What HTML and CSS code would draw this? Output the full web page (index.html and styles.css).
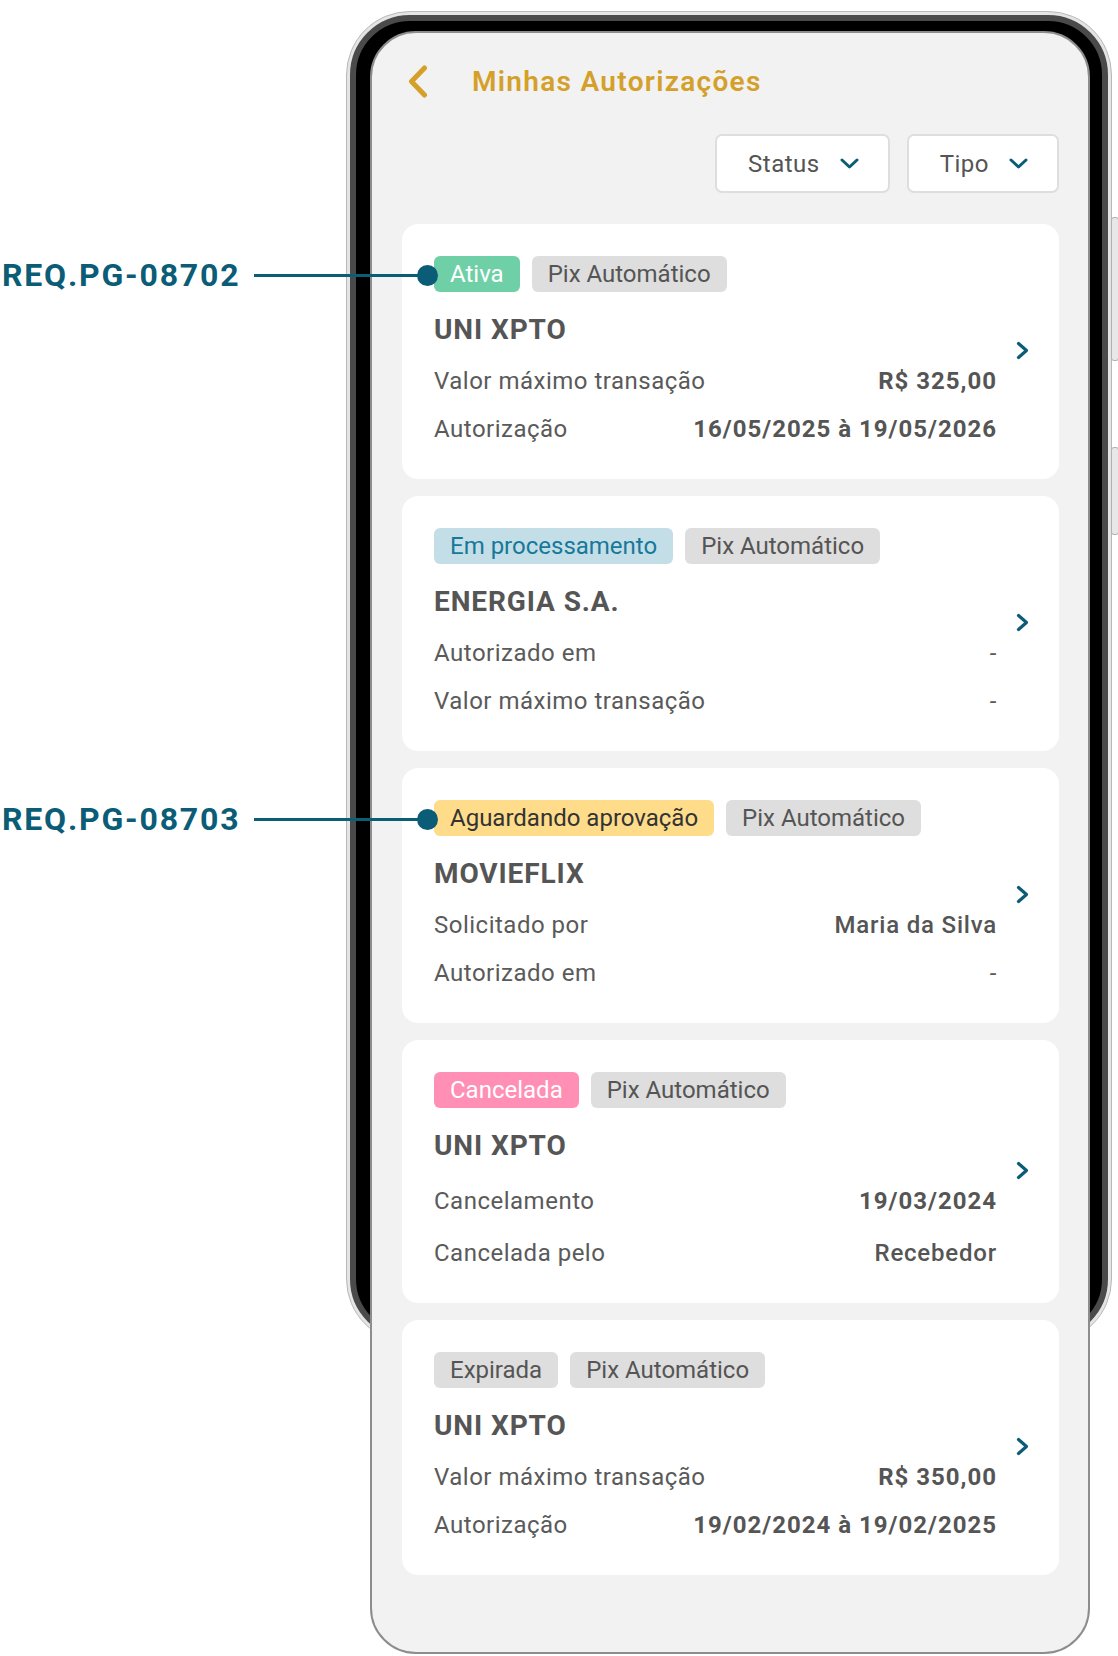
FILE: index.html
```html
<!DOCTYPE html>
<html lang="pt-BR">

<head>
    <meta charset="UTF-8">
    <title>Minhas Autorizações</title>
    <link rel="stylesheet" href="styles.css">
</head>

<body>
    <div class="page">
        <!-- moldura do aparelho -->
        <div class="phone-frame">
            <div class="bezel"></div>
        </div>
        <div class="side-btn side-btn-1"></div>
        <div class="side-btn side-btn-2"></div>

        <div class="screen">
            <div class="header">
                <svg class="back" width="20" height="33" viewBox="0 0 20 33">
                    <polyline points="16.5,3 3.5,16.5 16.5,30" fill="none" stroke="#d4a02a" stroke-width="5" stroke-linecap="round" stroke-linejoin="round" />
                </svg>
                <h1>Minhas Autorizações</h1>
            </div>

            <div class="filters">
                <div class="filter">Status
                    <svg width="19" height="11" viewBox="0 0 19 11">
                        <polyline points="2,2 9.5,9 17,2" fill="none" stroke="#0b5c76" stroke-width="3" stroke-linecap="round" stroke-linejoin="round" />
                    </svg>
                </div>
                <div class="filter">Tipo
                    <svg width="19" height="11" viewBox="0 0 19 11">
                        <polyline points="2,2 9.5,9 17,2" fill="none" stroke="#0b5c76" stroke-width="3" stroke-linecap="round" stroke-linejoin="round" />
                    </svg>
                </div>
            </div>

            <div class="list">
                <div class="card">
                    <div class="annot">
                        <span class="annot-label">REQ.PG-08702</span>
                        <span class="annot-line"></span>
                        <span class="annot-dot"></span>
                    </div>
                    <div class="card-body">
                        <div class="badges">
                            <span class="badge badge-active">Ativa</span>
                            <span class="badge">Pix Automático</span>
                        </div>
                        <h3>UNI XPTO</h3>
                        <div class="row"><span>Valor máximo transação</span><span class="strong">R$ 325,00</span></div>
                        <div class="row"><span>Autorização</span><span class="strong">16/05/2025 à 19/05/2026</span></div>
                    </div>
                    <svg class="go" width="13" height="19" viewBox="0 0 13 19">
                        <polyline points="2.5,2.5 10.5,9.5 2.5,16.5" fill="none" stroke="#0b5c76" stroke-width="3.2" stroke-linecap="round" stroke-linejoin="round" />
                    </svg>
                </div>

                <div class="card">
                    <div class="card-body">
                        <div class="badges">
                            <span class="badge badge-processing">Em processamento</span>
                            <span class="badge">Pix Automático</span>
                        </div>
                        <h3>ENERGIA S.A.</h3>
                        <div class="row"><span>Autorizado em</span><span>-</span></div>
                        <div class="row"><span>Valor máximo transação</span><span>-</span></div>
                    </div>
                    <svg class="go" width="13" height="19" viewBox="0 0 13 19">
                        <polyline points="2.5,2.5 10.5,9.5 2.5,16.5" fill="none" stroke="#0b5c76" stroke-width="3.2" stroke-linecap="round" stroke-linejoin="round" />
                    </svg>
                </div>

                <div class="card">
                    <div class="annot">
                        <span class="annot-label">REQ.PG-08703</span>
                        <span class="annot-line"></span>
                        <span class="annot-dot"></span>
                    </div>
                    <div class="card-body">
                        <div class="badges">
                            <span class="badge badge-waiting">Aguardando aprovação</span>
                            <span class="badge">Pix Automático</span>
                        </div>
                        <h3>MOVIEFLIX</h3>
                        <div class="row"><span>Solicitado por</span><span class="medium">Maria da Silva</span></div>
                        <div class="row"><span>Autorizado em</span><span>-</span></div>
                    </div>
                    <svg class="go" width="13" height="19" viewBox="0 0 13 19">
                        <polyline points="2.5,2.5 10.5,9.5 2.5,16.5" fill="none" stroke="#0b5c76" stroke-width="3.2" stroke-linecap="round" stroke-linejoin="round" />
                    </svg>
                </div>

                <div class="card card-wide">
                    <div class="card-body">
                        <div class="badges">
                            <span class="badge badge-canceled">Cancelada</span>
                            <span class="badge">Pix Automático</span>
                        </div>
                        <h3>UNI XPTO</h3>
                        <div class="row"><span>Cancelamento</span><span class="strong">19/03/2024</span></div>
                        <div class="row"><span>Cancelada pelo</span><span class="medium">Recebedor</span></div>
                    </div>
                    <svg class="go" width="13" height="19" viewBox="0 0 13 19">
                        <polyline points="2.5,2.5 10.5,9.5 2.5,16.5" fill="none" stroke="#0b5c76" stroke-width="3.2" stroke-linecap="round" stroke-linejoin="round" />
                    </svg>
                </div>

                <div class="card">
                    <div class="card-body">
                        <div class="badges">
                            <span class="badge">Expirada</span>
                            <span class="badge">Pix Automático</span>
                        </div>
                        <h3>UNI XPTO</h3>
                        <div class="row"><span>Valor máximo transação</span><span class="strong">R$ 350,00</span></div>
                        <div class="row"><span>Autorização</span><span class="strong">19/02/2024 à 19/02/2025</span></div>
                    </div>
                    <svg class="go" width="13" height="19" viewBox="0 0 13 19">
                        <polyline points="2.5,2.5 10.5,9.5 2.5,16.5" fill="none" stroke="#0b5c76" stroke-width="3.2" stroke-linecap="round" stroke-linejoin="round" />
                    </svg>
                </div>
            </div>
        </div>
    </div>
</body>

</html>
```

FILE: styles.css
```css
body {
    margin: 0;
    background: #fff;
    font-family: Roboto, "Liberation Sans", sans-serif;
    color: #5a5a5a;
}

.page {
    position: relative;
    width: 1118px;
    height: 1656px;
    overflow: hidden;
}

/* aparelho */
.phone-frame {
    position: absolute;
    left: 346px;
    top: 11px;
    width: 766px;
    height: 1332px;
    box-sizing: border-box;
    border-radius: 64px;
    background: #e4e4e4;
    border: 1px solid #b8b8b8;
    padding: 3px;
}

.bezel {
    height: 100%;
    box-sizing: border-box;
    border-radius: 60px;
    background: #000;
    border: 6px solid #4a4a4a;
}

.side-btn {
    position: absolute;
    left: 1111px;
    width: 6px;
    border-radius: 3px;
    background: #e8e8e8;
    border: 1px solid #b0b0b0;
}

.side-btn-1 {
    top: 217px;
    height: 142px;
}

.side-btn-2 {
    top: 447px;
    height: 86px;
}

.screen {
    position: relative;
    z-index: 1;
    margin: 31px 0 0 370px;
    width: 720px;
    height: 1623px;
    box-sizing: border-box;
    background: #f2f2f2;
    border: 2px solid #8d8d8d;
    border-radius: 46px;
    padding: 0 29px 0 30px;
}

.header {
    display: flex;
    align-items: center;
    gap: 44px;
    padding: 32px 0 0 6px;
    height: 33px;
}

.header h1 {
    margin: 0;
    font-size: 28px;
    font-weight: 600;
    letter-spacing: 1.3px;
    color: #d4a02a;
}

.filters {
    display: flex;
    justify-content: flex-end;
    gap: 17px;
    margin-top: 36px;
}

.filter {
    display: flex;
    align-items: center;
    gap: 20px;
    height: 59px;
    box-sizing: border-box;
    padding: 0 29px 0 31px;
    background: #fff;
    border: 2px solid #dedede;
    border-radius: 7px;
    font-size: 24px;
    letter-spacing: 0.5px;
    color: #555;
}

.list {
    display: flex;
    flex-direction: column;
    gap: 17px;
    margin-top: 31px;
}

.card {
    position: relative;
    display: flex;
    align-items: center;
    background: #fff;
    border-radius: 16px;
    padding: 32px 30px 34px 32px;
}

.card-body {
    flex: 1;
    margin-right: 19px;
}

.badges {
    display: flex;
    gap: 12px;
}

.badge {
    height: 36px;
    line-height: 36px;
    padding: 0 16px;
    border-radius: 6px;
    font-size: 24px;
    background: #dedede;
    color: #555;
}

.badge-active {
    background: #6fd0a7;
    color: #fff;
}

.badge-processing {
    background: #c4dee7;
    color: #17799a;
}

.badge-waiting {
    background: #fedc8a;
    color: #333;
}

.badge-canceled {
    background: #ff8fb4;
    color: #fff;
}

.card h3 {
    margin: 21px 0 0;
    font-size: 28px;
    line-height: 34px;
    font-weight: 700;
    letter-spacing: 0.9px;
    color: #555;
}

.row {
    display: flex;
    justify-content: space-between;
    font-size: 24px;
    line-height: 32px;
    letter-spacing: 0.5px;
    margin-top: 16px;
}

.card h3 + .row {
    margin-top: 18px;
}

.card-wide .row {
    margin-top: 20px;
}

.card-wide h3 + .row {
    margin-top: 22px;
}

.strong {
    font-weight: 700;
    letter-spacing: 1px;
    color: #555;
}

.medium {
    font-weight: 500;
    letter-spacing: 0.8px;
    color: #555;
}

.go {
    flex: none;
}

/* marcações de requisito */
.annot {
    position: absolute;
    left: -400px;
    top: 40px;
    height: 22px;
    display: flex;
    align-items: center;
}

.annot-label {
    font-size: 32px;
    font-weight: 700;
    letter-spacing: 1.8px;
    color: #0b5c76;
    width: 236px;
    white-space: nowrap;
}

.annot-line {
    width: 166px;
    height: 3px;
    margin-left: 16px;
    background: #0b5c76;
}

.annot-dot {
    width: 21px;
    height: 21px;
    margin-left: -3px;
    border-radius: 50%;
    background: #0b5c76;
}
```
